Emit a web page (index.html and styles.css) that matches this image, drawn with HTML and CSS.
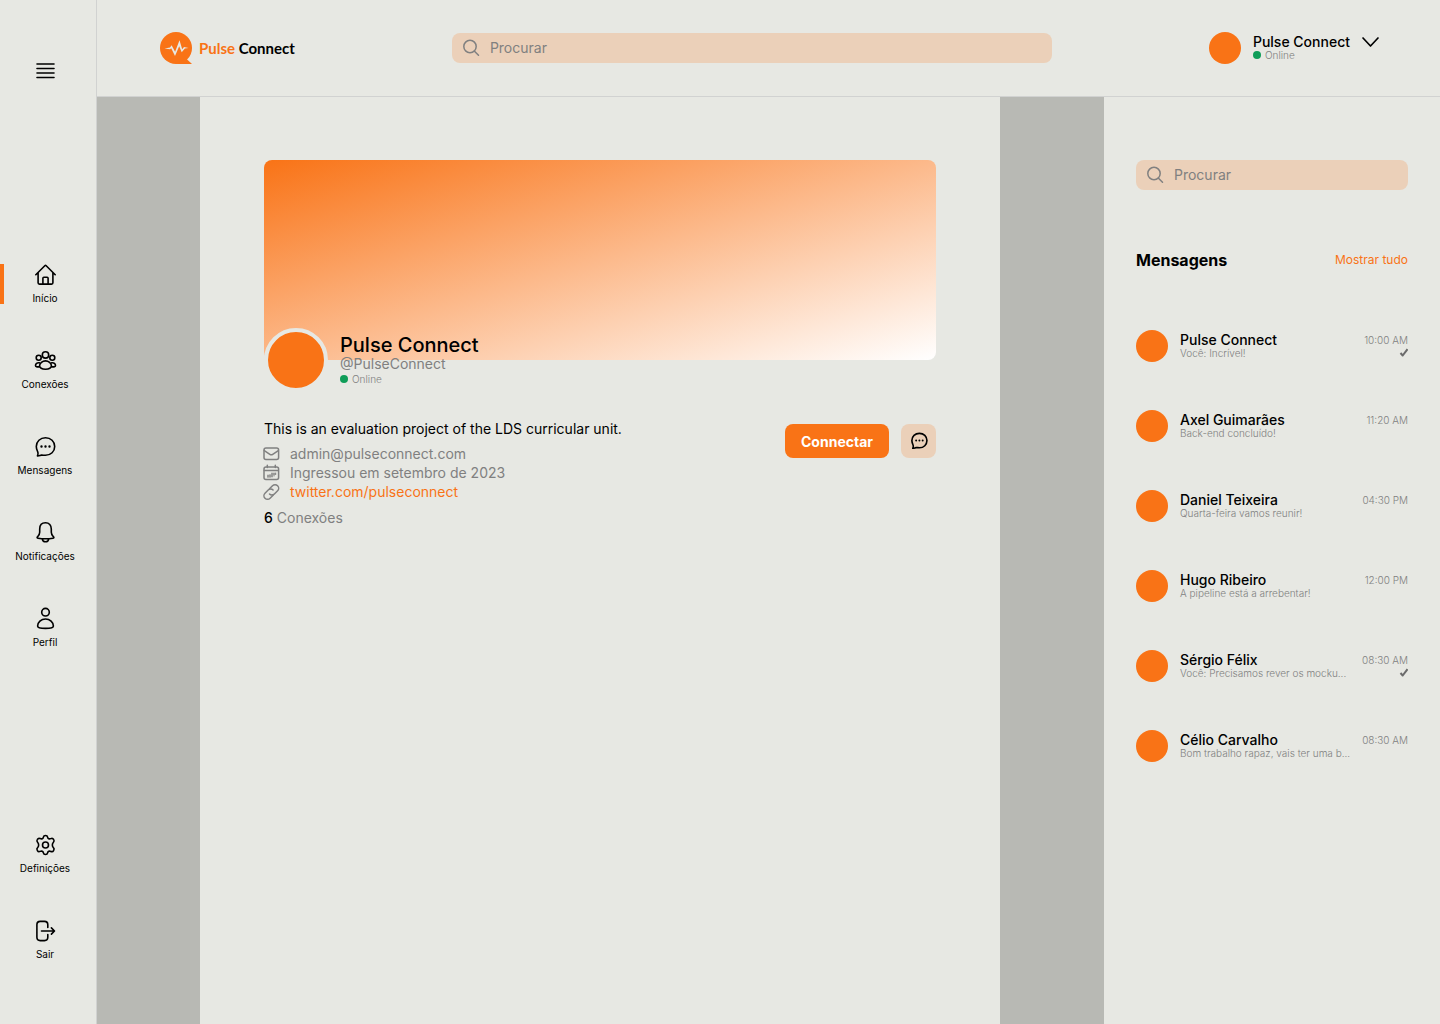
FILE: index.html
```html
<!DOCTYPE html>
<html lang="pt">
<head>
<meta charset="utf-8">
<meta name="viewport" content="width=device-width, initial-scale=1">
<title>Pulse Connect</title>
<link rel="stylesheet" href="styles.css">
</head>
<body>
<svg class="sprite" aria-hidden="true">
  <symbol id="chat" viewBox="0 0 22 22">
    <path d="M11.500 1.700c5.300 0 9.200 3.800 9.200 8.800s-3.900 8.800-9.200 8.800c-1.700 0-2.900-.3-4.100-.2-1.300.2-2.500 1-4 .8.900-1.300.8-2.300.5-3.500-.5-1.600-1.600-3.200-1.600-5.900 0-5 3.900-8.800 9.200-8.800Z"/>
    <path class="dots" d="M7.500 10.500h.01M11.500 10.500h.01M15.500 10.500h.01"/>
  </symbol>
  <symbol id="search" viewBox="0 0 18 18">
    <circle cx="8" cy="7.500" r="6.200"/><path d="m12.500 12.200 4 4"/>
  </symbol>
  <symbol id="check" viewBox="0 0 10 10">
    <path d="m2.500 6 2.200 2.500 4.800-6.300"/>
  </symbol>
</svg>
<div class="app">
  <aside class="sidebar">
    <button class="menu-button" type="button" aria-label="Menu">
      <svg class="icon" viewBox="0 0 22 22"><path d="M3 4h17M3 8.500h17M3 13h17M3 17.500h17"/></svg>
    </button>
    <nav class="side-nav">
      <a class="side-link active" href="#"><svg class="icon" viewBox="0 0 22 22"><path d="m1.800 10.700 9-9a1 1 0 0 1 1.400 0l9 9M4.100 8.500v10.300c0 .8.5 1.300 1.300 1.300h12.200c.8 0 1.300-.5 1.300-1.300V8.500M8.900 20V14.300c0-.6.4-1 1-1h3.200c.6 0 1 .4 1 1V20"/></svg>Início</a>
      <a class="side-link" href="#"><svg class="icon" viewBox="0 0 22 22"><circle cx="11.500" cy="4.900" r="3.200"/><circle cx="4.700" cy="7.800" r="2.500"/><circle cx="18.300" cy="7.800" r="2.500"/><path d="M11.500 10.900c-3.200 0-5.700 2.300-5.900 4.600-.1 2.400 2.300 3.800 5.900 3.800s6-1.400 5.900-3.800c-.2-2.300-2.700-4.600-5.900-4.600ZM5.300 12.800c-2.300-.4-3.800 1.300-3.800 2.700 0 1.100 1.400 1.500 3.700 1.400M17.700 12.800c2.300-.4 3.800 1.300 3.800 2.700 0 1.100-1.400 1.500-3.700 1.400"/></svg>Conexões</a>
      <a class="side-link" href="#"><svg class="icon"><use href="#chat"/></svg>Mensagens</a>
      <a class="side-link" href="#"><svg class="icon" viewBox="0 0 22 22"><path d="M11.500.8c-3.700 0-5.800 2.600-5.800 6.200v3.200c0 2.500-1.300 3.500-2.400 4.800-.5.7 0 1.200.7 1.200 5 .7 10 .7 15 0 .7 0 1.200-.5.700-1.200-1.100-1.300-2.400-2.300-2.400-4.800V7c0-3.600-2.100-6.200-5.800-6.200ZM8.300 16.800c.2 1.800 1.400 2.900 3.200 2.900s3-1.100 3.200-2.900"/></svg>Notificações</a>
      <a class="side-link" href="#"><svg class="icon" viewBox="0 0 22 22"><circle cx="11.500" cy="4.200" r="3.800"/><path d="M11.500 11c-4.400 0-7.900 3.500-7.900 7 0 1.700 3.500 2.400 7.900 2.400s7.900-.7 7.900-2.400c0-3.500-3.500-7-7.900-7Z"/></svg>Perfil</a>
    </nav>
    <nav class="side-nav side-nav-bottom">
      <a class="side-link" href="#"><svg class="icon" viewBox="0 0 22 22"><circle cx="11.500" cy="11" r="3"/><path transform="translate(.5)" d="M8.900 3.100C9.100 1.900 9.700 1.500 11 1.500S12.900 1.900 13.100 3.100C13.400 4.800 14.800 5.300 16.300 4.600 17.600 4 18.400 4.200 19.100 5.400 19.900 6.700 19.900 7.500 18.900 8.400 17.500 9.700 17.500 12.300 18.900 13.600 19.900 14.500 19.900 15.300 19.100 16.600 18.400 17.800 17.600 18 16.300 17.400 14.800 16.700 13.400 17.200 13.100 18.900 12.900 20.100 12.300 20.500 11 20.500S9.100 20.100 8.900 18.900C8.600 17.200 7.200 16.700 5.700 17.400 4.400 18 3.600 17.800 2.900 16.600 2.100 15.300 2.100 14.500 3.100 13.600 4.500 12.300 4.500 9.700 3.100 8.400 2.100 7.500 2.100 6.700 2.900 5.400 3.600 4.200 4.400 4 5.700 4.600 7.200 5.300 8.600 4.800 8.900 3.100Z"/></svg>Definições</a>
      <a class="side-link" href="#"><svg class="icon" viewBox="0 0 22 22"><path d="M13.800 7.500V4.700c0-2-1.300-3.300-3.300-3.300H6.200c-2 0-3.300 1.300-3.300 3.300v12.600c0 2 1.300 3.300 3.300 3.300h4.300c2 0 3.300-1.300 3.300-3.300v-2.800M7.500 11H20M17.400 7.900l3.100 3.100-3.100 3.100"/></svg>Sair</a>
    </nav>
  </aside>

  <div class="page">
    <header class="topbar">
      <a class="logo" href="#">
        <svg class="logo-mark" viewBox="0 0 32 32"><circle cx="16" cy="16" r="16" fill="#f97316"/><path d="M16 32h16l-6-5.500Z" fill="#f97316"/><path d="M4.500 16.500 10 15.400l1.600-2.200 3.500 6.500 4.400-11.500 2.700 9 1.800-2.300 4.500 1.200-3.600.4-3.200 3.700-2.500-6-4.200 9.800-3.800-7.700-1.200.9Z" fill="#e7e8e3"/></svg>
        <span class="logo-text"><span class="logo-accent">Pulse</span> Connect</span>
      </a>
      <label class="search search-main">
        <svg class="search-icon"><use href="#search"/></svg>
        <input type="search" placeholder="Procurar" aria-label="Procurar">
      </label>
      <button class="user-menu" type="button">
        <span class="avatar"></span>
        <span class="lines">
          <span class="name">Pulse Connect</span>
          <span class="status">Online</span>
        </span>
        <svg class="chevron" viewBox="0 0 18 20"><path d="m1 6 7.500 8L16 6"/></svg>
      </button>
    </header>

    <div class="workspace">
      <main class="profile">
        <div class="banner"></div>
        <section class="identity">
          <span class="avatar avatar-large"></span>
          <div class="identity-text">
            <h1>Pulse Connect</h1>
            <p class="handle">@PulseConnect</p>
            <p class="status">Online</p>
          </div>
        </section>
        <section class="details">
          <div class="about">
            <p class="bio">This is an evaluation project of the LDS curricular unit.</p>
            <ul class="facts">
              <li><svg class="fact-icon" viewBox="0 0 16 16"><rect x="0" y="2" width="14.600" height="11.500" rx="2"/><path d="m.3 4.600 5.600 3.700c.9.6 1.900.6 2.800 0l5.600-3.700"/></svg>admin@pulseconnect.com</li>
              <li><svg class="fact-icon" viewBox="0 0 16 16"><rect x="0" y="2" width="14.600" height="12.500" rx="2"/><path d="M.3 5.500h14M3.300.3V2.500M11.300.3V2.500"/><path class="thin" d="M4 10v2.500M6 9.500v3M8 8v4M10 8v3M11.700 8v1.500M3.500 11h5M7.500 9h4"/></svg>Ingressou em setembro de 2023</li>
              <li><svg class="fact-icon" viewBox="0 0 16 16"><path d="m5.500 4.700 3-3a3.600 3.600 0 0 1 5.100 5.100l-3.200 3.200c-1.400 1.400-3.600 1.400-4.900 0"/><path d="m9.100 11.300-3 3A3.600 3.600 0 0 1 1 9.200L4.200 6c1.400-1.400 3.600-1.400 4.900 0"/></svg><a href="#">twitter.com/pulseconnect</a></li>
            </ul>
            <p class="count"><strong>6</strong> Conexões</p>
          </div>
          <div class="actions">
            <button class="connect" type="button">Connectar</button>
            <button class="message" type="button" aria-label="Enviar mensagem"><svg><use href="#chat"/></svg></button>
          </div>
        </section>
      </main>

      <aside class="inbox">
        <label class="search">
          <svg class="search-icon"><use href="#search"/></svg>
          <input type="search" placeholder="Procurar" aria-label="Procurar mensagens">
        </label>
        <div class="inbox-head">
          <h2>Mensagens</h2>
          <a href="#">Mostrar tudo</a>
        </div>
        <ul class="threads">
          <li><span class="avatar"></span><div class="lines"><span class="name">Pulse Connect</span><span class="preview">Você: Incrível!</span></div><div class="lines when"><time>10:00 AM</time><svg class="check"><use href="#check"/></svg></div></li>
          <li><span class="avatar"></span><div class="lines"><span class="name">Axel Guimarães</span><span class="preview">Back-end concluído!</span></div><div class="lines when"><time>11:20 AM</time></div></li>
          <li><span class="avatar"></span><div class="lines"><span class="name">Daniel Teixeira</span><span class="preview">Quarta-feira vamos reunir!</span></div><div class="lines when"><time>04:30 PM</time></div></li>
          <li><span class="avatar"></span><div class="lines"><span class="name">Hugo Ribeiro</span><span class="preview">A pipeline está a arrebentar!</span></div><div class="lines when"><time>12:00 PM</time></div></li>
          <li><span class="avatar"></span><div class="lines"><span class="name">Sérgio Félix</span><span class="preview">Você: Precisamos rever os mocku...</span></div><div class="lines when"><time>08:30 AM</time><svg class="check"><use href="#check"/></svg></div></li>
          <li><span class="avatar"></span><div class="lines"><span class="name">Célio Carvalho</span><span class="preview">Bom trabalho rapaz, vais ter uma b...</span></div><div class="lines when"><time>08:30 AM</time></div></li>
        </ul>
      </aside>
    </div>
  </div>
</div>
</body>
</html>
```
FILE: styles.css
```css
:root {
  --surface: #e7e8e3;
  --gutter: #b8b9b4;
  --line: #d1d2d1;
  --accent: #f97316;
  --tint: #ebd0b9;
  --muted: #808080;
}

* { box-sizing: border-box; margin: 0; padding: 0; }

body {
  background: var(--surface);
  color: #000;
  font-family: Inter, "Liberation Sans", sans-serif;
  font-size: 14px;
}

button, input { font: inherit; color: inherit; border: 0; background: none; }
button { cursor: pointer; }
a { color: inherit; text-decoration: none; }
ul { list-style: none; }
svg { display: block; flex: none; fill: none; stroke: currentColor; stroke-linecap: round; stroke-linejoin: round; overflow: visible; }

.sprite { position: absolute; width: 0; height: 0; }
.dots { stroke-width: 2.4; }

.app { display: flex; min-height: 100vh; }

/* Sidebar */
.sidebar {
  display: flex;
  flex: none;
  flex-direction: column;
  width: 97px;
  padding: 60px 6px 64px 0;
  border-right: 1px solid var(--line);
}
.icon { width: 22px; height: 22px; stroke-width: 1.6; }
.menu-button { align-self: center; margin-bottom: 182px; }
.side-nav { display: flex; flex-direction: column; gap: 46px; }
.side-nav-bottom { margin-top: auto; }
.side-link {
  position: relative;
  display: flex;
  flex-direction: column;
  align-items: center;
  gap: 6px;
  font-size: 10px;
  line-height: 12px;
}
.side-link.active::before {
  content: "";
  position: absolute;
  inset: 0 auto 0 0;
  width: 4px;
  background: var(--accent);
}

.page { display: flex; flex: 1; flex-direction: column; min-width: 0; }

/* Top bar */
.topbar {
  display: flex;
  align-items: center;
  justify-content: space-between;
  gap: 16px;
  height: 97px;
  padding: 0 60px 0 63px;
  border-bottom: 1px solid var(--line);
}
.logo { display: flex; align-items: center; gap: 7px; }
.logo-mark { width: 32px; height: 32px; stroke: none; }
.logo-text { font: 700 15px/20px Lato, "Open Sans", sans-serif; white-space: nowrap; }
.logo-accent { color: var(--accent); }

.search {
  display: flex;
  align-items: center;
  gap: 10px;
  height: 30px;
  padding: 0 10px;
  border-radius: 8px;
  background: var(--tint);
  color: var(--muted);
}
.search-main { width: 600px; }
.search-icon { width: 18px; height: 18px; stroke-width: 1.5; }
.search input { flex: 1; min-width: 0; outline: 0; line-height: 18px; appearance: none; }
.search input::placeholder { color: var(--muted); opacity: 1; }

.user-menu { display: flex; align-items: center; gap: 12px; text-align: left; }
.chevron { align-self: flex-start; width: 18px; height: 20px; stroke-width: 1.7; }

.avatar { flex: none; width: 32px; height: 32px; border-radius: 50%; background: var(--accent); }
.lines { display: flex; flex-direction: column; white-space: nowrap; }
.name { font-weight: 500; line-height: 14px; }
.status {
  display: flex;
  align-items: center;
  gap: 4px;
  color: var(--muted);
  font-size: 10px;
  font-weight: 300;
  line-height: 12px;
}
.status::before { content: ""; width: 8px; height: 8px; border-radius: 50%; background: #0f9d58; }

/* Workspace */
.workspace {
  display: grid;
  flex: 1;
  grid-template-columns: 103fr minmax(0, 800px) 104fr 336px;
  background: var(--gutter);
}
.profile {
  grid-column: 2;
  padding: 63px 64px;
  background: var(--surface);
}
.banner {
  height: 200px;
  border-radius: 8px;
  background: linear-gradient(to bottom right, var(--accent), #fff);
}
.identity { display: flex; gap: 12px; margin-top: -32px; }
.avatar-large { width: 64px; height: 64px; border: 4px solid var(--surface); }
.identity-text { padding-top: 5px; }
h1 { font-size: 20px; font-weight: 500; line-height: 24px; }
.handle { margin-bottom: 2px; color: var(--muted); line-height: 14px; }

.details { display: flex; justify-content: space-between; gap: 24px; margin-top: 28px; }
.bio { line-height: 18px; }
.facts { margin: 6px 0 8px; color: var(--muted); line-height: 19px; }
.facts li { display: flex; align-items: center; gap: 10px; }
.facts a { color: var(--accent); }
.fact-icon { width: 16px; height: 16px; stroke-width: 1.5; }
.thin { stroke-width: 1; }
.count { color: var(--muted); line-height: 18px; }
.count strong { color: #000; font-weight: 500; }

.actions { display: flex; align-items: flex-start; gap: 12px; padding-top: 4px; }
.connect, .message { height: 34px; border-radius: 8px; }
.connect { padding: 0 16px; background: var(--accent); color: #fff; font-weight: 700; }
.message { display: grid; place-items: center; width: 35px; background: var(--tint); }
.message svg { width: 18px; height: 18px; stroke-width: 2; }

/* Inbox */
.inbox {
  grid-column: 4;
  padding: 63px 32px;
  background: var(--surface);
}
.inbox-head {
  display: flex;
  align-items: center;
  justify-content: space-between;
  margin: 60px 0;
  line-height: 20px;
}
h2 { font-size: 16px; font-weight: 700; }
.inbox-head a { color: var(--accent); font-size: 12px; }
.threads { display: flex; flex-direction: column; gap: 48px; }
.threads li { display: flex; align-items: center; gap: 12px; height: 32px; }
.preview, time { color: var(--muted); font-size: 10px; font-weight: 300; }
.preview { line-height: 12px; }
time { line-height: 14px; }
.when { align-items: flex-end; min-height: 26px; margin-left: auto; }
.check { width: 10px; height: 10px; color: #6b6b6b; stroke-width: 2; stroke-linecap: butt; }
```
